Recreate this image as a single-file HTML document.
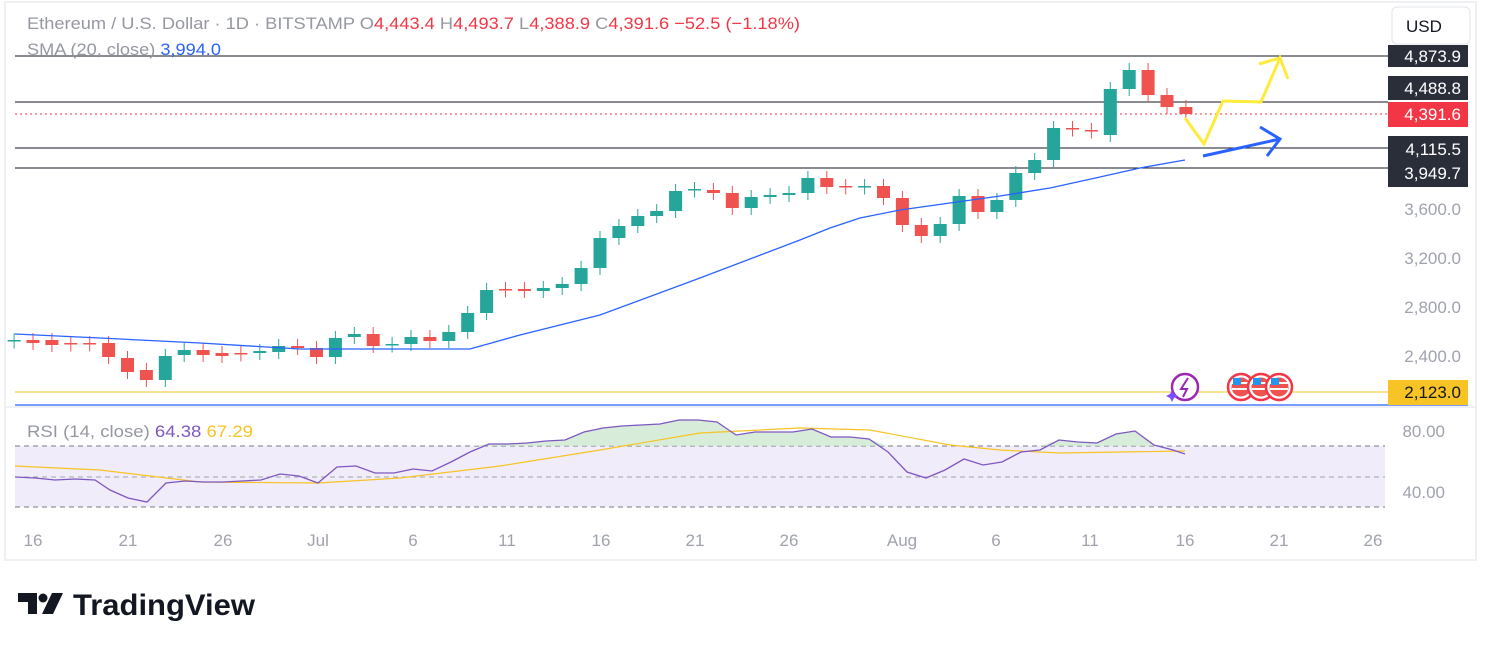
<!DOCTYPE html>
<html><head><meta charset="utf-8"><style>
body{margin:0;width:1491px;height:650px;background:#fff;overflow:hidden;font-family:"Liberation Sans",sans-serif;}
svg text{font-family:"Liberation Sans",sans-serif;}
</style></head><body>
<svg id="s" width="1491" height="650" xmlns="http://www.w3.org/2000/svg">
<rect x="5" y="2" width="1471" height="558" fill="#fff" stroke="#eef0f3" stroke-width="2"/>
<rect x="15" y="446" width="1370" height="61" fill="#f0ecf9"/>
<line x1="15" y1="446" x2="1385" y2="446" stroke="#787b86" stroke-dasharray="5,4"/>
<line x1="15" y1="477" x2="1385" y2="477" stroke="#a0a3ad" stroke-dasharray="5,4"/>
<line x1="15" y1="507" x2="1385" y2="507" stroke="#787b86" stroke-dasharray="5,4"/>
<line x1="5" y1="407" x2="1476" y2="407" stroke="#e0e3eb"/>
<line x1="15" y1="56" x2="1388" y2="56" stroke="#131722"/>
<line x1="15" y1="102" x2="1388" y2="102" stroke="#131722"/>
<line x1="15" y1="148" x2="1388" y2="148" stroke="#131722"/>
<line x1="15" y1="168" x2="1388" y2="168" stroke="#131722"/>
<line x1="15" y1="114" x2="1388" y2="114" stroke="#f23645" stroke-dasharray="2,3"/>
<line x1="15" y1="392" x2="1388" y2="392" stroke="#f7c325"/>
<line x1="15" y1="405" x2="1468" y2="405" stroke="#2962ff" stroke-width="1.2"/>
<g id="c"></g>
<polyline fill="none" stroke="#2962ff" stroke-width="1.3" points="15,334 100,338 200,343 300,349 470,349 520,335 600,315 700,278 800,240 830,228 860,218 900,210 950,203 1000,196 1050,188 1100,177 1140,168 1185,160"/>
<polyline fill="none" stroke="#ffeb3b" stroke-width="3" points="1185,118 1204,144 1223,101 1261,102 1280,58 1288,79"/>
<polyline fill="none" stroke="#ffeb3b" stroke-width="3" points="1259,64 1280,58"/>
<line x1="1203" y1="156" x2="1280" y2="139" stroke="#2962ff" stroke-width="3"/>
<polyline fill="none" stroke="#2962ff" stroke-width="3" points="1260,127 1280,139 1267,156"/>
<path id="rf" fill="#c8e6c9" opacity="0.7"/>
<polyline id="rm" fill="none" stroke="#f7c325" stroke-width="1.2" points="15,466 100,470 200,482 318,483 400,478 500,466 600,450 700,433 800,428 870,430 950,445 1000,450 1060,453 1185,451"/>
<polyline id="rl" fill="none" stroke="#7e57c2" stroke-width="1.3"/>
<circle cx="1185" cy="387" r="13" fill="#fff" stroke="#9c27b0" stroke-width="2.5"/>
<path d="M1188,378 L1181,389 L1187,389 L1183,397" fill="none" stroke="#9c27b0" stroke-width="2"/>
<path d="M1170,394 l2,-4 l2,4 l4,2 l-4,2 l-2,4 l-2,-4 l-4,-2z" fill="#7c4dff"/>
<g id="fl"></g>
<rect x="1388" y="45" width="80" height="22" fill="#2a2e39"/><text x="1461" y="62" fill="#fff" font-size="17" text-anchor="end">4,873.9</text>
<rect x="1388" y="76" width="80" height="24" fill="#2a2e39"/><text x="1461" y="94" fill="#fff" font-size="17" text-anchor="end">4,488.8</text>
<rect x="1388" y="102" width="80" height="25" fill="#f23645"/><text x="1461" y="120" fill="#fff" font-size="17" text-anchor="end">4,391.6</text>
<rect x="1388" y="136" width="80" height="51" fill="#2a2e39"/><text x="1461" y="155" fill="#fff" font-size="17" text-anchor="end">4,115.5</text><text x="1461" y="179" fill="#fff" font-size="17" text-anchor="end">3,949.7</text>
<rect x="1388" y="380" width="80" height="25" fill="#f7c325"/><text x="1461" y="398" fill="#131722" font-size="17" text-anchor="end">2,123.0</text>
<g fill="#a0a3ad" font-size="17" text-anchor="end">
<text x="1461" y="215">3,600.0</text><text x="1461" y="264">3,200.0</text><text x="1461" y="313">2,800.0</text><text x="1461" y="362">2,400.0</text>
<text x="1445" y="437">80.00</text><text x="1445" y="498">40.00</text>
</g>
<g fill="#a0a3ad" font-size="17" text-anchor="middle">
<text x="33" y="546">16</text><text x="128" y="546">21</text><text x="223" y="546">26</text><text x="318" y="546">Jul</text><text x="413" y="546">6</text><text x="507" y="546">11</text><text x="601" y="546">16</text><text x="695" y="546">21</text><text x="789" y="546">26</text><text x="902" y="546">Aug</text><text x="996" y="546">6</text><text x="1090" y="546">11</text><text x="1185" y="546">16</text><text x="1279" y="546">21</text><text x="1373" y="546">26</text>
</g>
<rect x="1392" y="7" width="78" height="37" rx="5" fill="#fff" stroke="#e0e3eb"/>
<text x="1406" y="32" font-size="17" fill="#131722">USD</text>
<text x="27" y="29" font-size="17" fill="#9598a1" textLength="773" lengthAdjust="spacingAndGlyphs">Ethereum / U.S. Dollar · 1D · BITSTAMP <tspan>O</tspan><tspan fill="#f23645">4,443.4</tspan> <tspan>H</tspan><tspan fill="#f23645">4,493.7</tspan> <tspan>L</tspan><tspan fill="#f23645">4,388.9</tspan> <tspan>C</tspan><tspan fill="#f23645">4,391.6 −52.5 (−1.18%)</tspan></text>
<text x="27" y="55" font-size="17" fill="#9598a1" textLength="194" lengthAdjust="spacingAndGlyphs">SMA (20, close) <tspan fill="#2962ff">3,994.0</tspan></text>
<text x="27" y="437" font-size="17" fill="#9598a1" textLength="226" lengthAdjust="spacingAndGlyphs">RSI (14, close) <tspan fill="#7e57c2">64.38</tspan> <tspan fill="#f7c325">67.29</tspan></text>
<path d="M18,593 h19 v21 h-9 v-12 h-10z" fill="#131722"/>
<circle cx="43" cy="598" r="4.5" fill="#131722"/>
<path d="M52,593 h11 l-10,21 h-11z" fill="#131722"/>
<text x="73" y="615" font-size="30" font-weight="bold" fill="#131722" textLength="182" lengthAdjust="spacingAndGlyphs">TradingView</text>
</svg>
<script>
var C=[[-1,341,340],[0,340,343],[1,340,345],[2,343,344],[3,343,344],[4,343,357],[5,358,372],[6,370,380],[7,380,356],[8,355,350],[9,350,355],[10,353,356],[11,353,354],[12,353,351],[13,352,346],[14,346,348],[15,348,357],[16,357,338],[17,337,334],[18,334,346],[19,345,344],[20,344,337],[21,337,341],[22,341,332],[23,332,313],[24,313,290],[25,289,290],[26,289,291],[27,291,288],[28,288,284],[29,284,268],[30,268,238],[31,238,226],[32,226,216],[33,216,211],[34,211,191],[35,190,189],[36,190,193],[37,193,208],[38,208,197],[39,197,195],[40,195,193],[41,193,178],[42,178,187],[43,186,187],[44,187,186],[45,186,198],[46,198,225],[47,225,236],[48,236,224],[49,224,196],[50,196,212],[51,212,200],[52,200,173],[53,173,160],[54,160,128],[55,128,129],[56,130,131],[57,135,89],[58,89,70],[59,70,95],[60,95,107],[61,107,114]];
var h='';C.forEach(function(c){var x=33+18.9*c[0],o=c[1],cl=c[2],up=cl<o,col=up?'#26a69a':'#ef5350',t=Math.min(o,cl),b=Math.max(o,cl);if(b-t<1.5)b=t+1.5;
h+='<line x1="'+x+'" x2="'+x+'" y1="'+(t-7)+'" y2="'+(b+7)+'" stroke="'+col+'"/><rect x="'+(x-6.5)+'" y="'+t+'" width="13" height="'+(b-t)+'" fill="'+col+'"/>';});
document.getElementById('c').innerHTML=h;
var R="15,477 35,478 55,480 75,479 95,480 110,490 128,498 147,502 166,483 185,481 204,482 223,482 242,481 261,480 280,474 299,476 318,483 337,467 356,466 375,473 394,473 413,469 432,471 451,462 470,452 489,444 508,444 527,443 546,441 565,440 584,432 603,428 622,426 641,425 660,424 679,420 698,420 717,422 736,435 755,432 774,432 793,432 812,429 831,437 850,437 869,439 888,452 907,472 926,478 945,470 964,459 983,465 1002,462 1021,452 1040,450 1059,440 1078,442 1097,443 1116,434 1135,431 1154,445 1173,450 1185,454";
document.getElementById('rl').setAttribute('points',R);
var p=R.split(' ').map(function(s){var a=s.split(',');return [+a[0],Math.min(+a[1],446)];});
var d='M'+p[0][0]+',446 '+p.map(function(q){return 'L'+q[0]+','+q[1];}).join(' ')+' L1185,446Z';
document.getElementById('rf').setAttribute('d',d);
var f='';[1241,1261,1279].forEach(function(x){f+='<circle cx="'+x+'" cy="387" r="13" fill="#fff" stroke="#f23645" stroke-width="2.5"/><circle cx="'+x+'" cy="387" r="9.5" fill="#ef5350"/><rect x="'+(x-9)+'" y="382" width="18" height="2" fill="#fff"/><rect x="'+(x-9)+'" y="388" width="18" height="2" fill="#fff"/><rect x="'+(x-8)+'" y="378" width="8" height="7" fill="#2196f3"/>';});
document.getElementById('fl').innerHTML=f;
</script>
</body></html>
